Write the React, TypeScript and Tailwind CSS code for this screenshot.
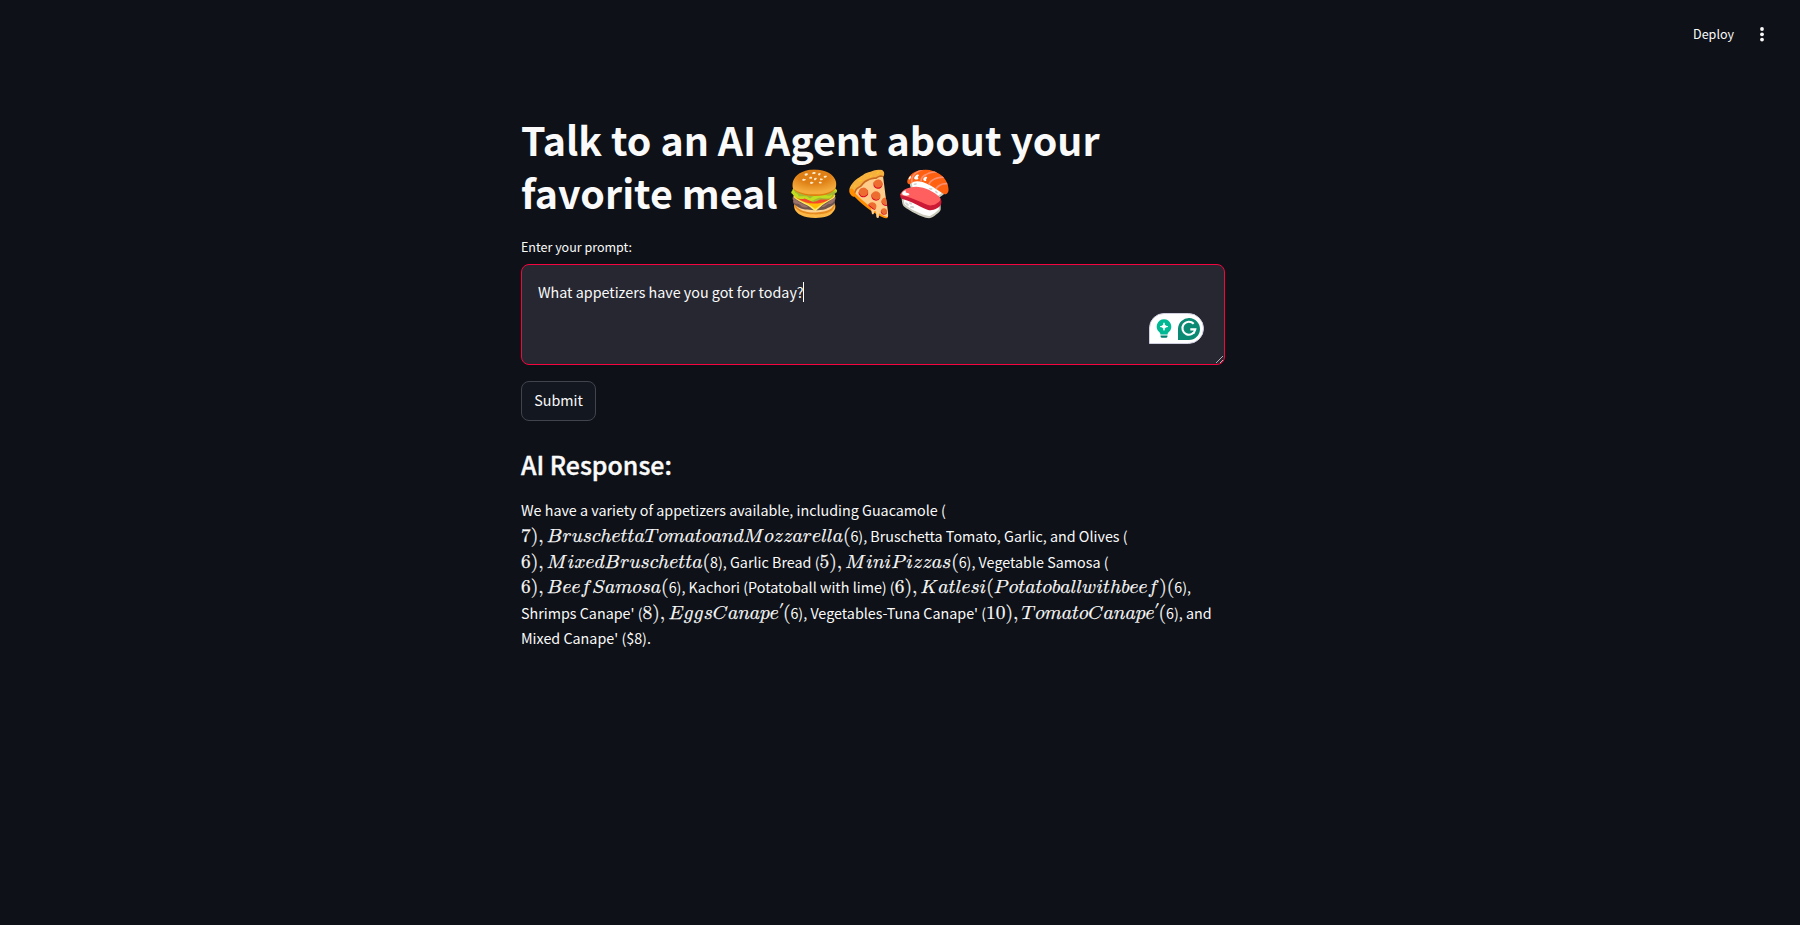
import { Fragment, type ReactNode } from "react";

// Italic correction that follows each slanted letter.
const italicGap: Record<string, string> = {
  B: "mr-[0.05em]",
  C: "mr-[0.072em]",
  E: "mr-[0.058em]",
  K: "mr-[0.072em]",
  M: "mr-[0.109em]",
  P: "mr-[0.139em]",
  S: "mr-[0.058em]",
  T: "mr-[0.125em]",
  f: "mr-[0.108em]",
  g: "mr-[0.036em]",
  r: "mr-[0.028em]",
  w: "mr-[0.027em]",
  z: "mr-[0.02em]",
};

function Formula({ children }: { children: string }) {
  const parts = children.match(/\d+|./g) ?? [];
  return (
    <math className="text-[19.36px] leading-none font-['Latin_Modern_Math',math] [-webkit-text-stroke:0.25px_#fafafa]">
      <mrow>
        {parts.map((part, i) => {
          if (/\d/.test(part)) return <mn key={i}>{part}</mn>;
          if (part === "(" || part === ")")
            return (
              <mo key={i} stretchy="false" lspace="0" rspace="0">
                {part}
              </mo>
            );
          if (part === ",")
            return (
              <mo key={i} lspace="0" rspace="0.1667em">
                ,
              </mo>
            );
          if (part === "′")
            return (
              <mpadded key={i} voffset="4px" lspace="-0.5px" width="4px" height="0" depth="0">
                <mtext className="text-[16px]">′</mtext>
              </mpadded>
            );
          return (
            <mi key={i} className={italicGap[part] ?? ""}>
              {part}
            </mi>
          );
        })}
      </mrow>
    </math>
  );
}

// Text between dollar signs is set as mathematics.
const responseLines = [
  "We have a variety of appetizers available, including Guacamole (",
  "$7),BruschettaTomatoandMozzarella($6), Bruschetta Tomato, Garlic, and Olives (",
  "$6),MixedBruschetta($8), Garlic Bread ($5),MiniPizzas($6), Vegetable Samosa (",
  "$6),BeefSamosa($6), Kachori (Potatoball with lime) ($6),Katlesi(Potatoballwithbeef)($6),",
  "Shrimps Canape' ($8),EggsCanape′($6), Vegetables-Tuna Canape' ($10),TomatoCanape′($6), and",
  "Mixed Canape' (\\$8).",
];

function renderLine(line: string): ReactNode {
  return line.split(/(?<!\\)\$/).map((piece, i) =>
    i % 2 === 1 ? (
      <Formula key={i}>{piece}</Formula>
    ) : (
      <Fragment key={i}>{piece.replace("\\$", "$")}</Fragment>
    )
  );
}

function AssistantBadge() {
  return (
    <svg className="absolute right-5 bottom-[20px] h-[31px] w-[55px]" viewBox="0 0 55 31">
      <path d="M.5 30.500V15A14.500 14.500 0 0 1 15 .5h24.500a15 15 0 0 1 0 30z" fill="#fff" stroke="#cfcfe0" />
      <path
        d="M15 6.300a7.300 7.300 0 0 0-4.900 12.700c.9.800 1.200 1.300 1.300 2.500h7.200c.1-1.200.4-1.700 1.300-2.500A7.300 7.300 0 0 0 15 6.300z"
        fill="#00b893"
      />
      <path d="M11.500 22.500h7v.8a1.600 1.600 0 0 1-1.600 1.500h-3.800a1.600 1.600 0 0 1-1.600-1.500z" fill="#027e6f" />
      <path d="M15 9.800c.5 2.600 1.200 3.300 3.800 3.800-2.600.5-3.300 1.200-3.800 3.800-.5-2.600-1.200-3.300-3.800-3.800 2.600-.5 3.300-1.200 3.800-3.800z" fill="#fff" stroke="#fff" strokeWidth=".8" />
      <path d="M29 27V15.500A11 11 0 1 1 40 27z" fill="#0a8a73" />
      <path
        d="M44.700 10.800A6.500 6.500 0 1 0 46.300 16.400H41.300M46.300 16.400l-1.900 4.200"
        fill="none"
        stroke="#fff"
        strokeWidth="2.100"
      />
    </svg>
  );
}

export default function App() {
  return (
    <div className="h-[925px] w-full overflow-hidden bg-[#0e1117] font-['Noto_Sans_CJK_SC','Noto_Sans',sans-serif] text-[#fafafa]">
      <header className="flex h-[60px] items-center justify-end pt-[7px] pr-[32px]">
        <span className="text-[12.53px] leading-5">Deploy</span>
        <svg className="ml-[22px] h-5 w-3" viewBox="0 0 12 20" fill="currentColor">
          <circle cx="6" cy="5" r="1.900" />
          <circle cx="6" cy="10.300" r="1.900" />
          <circle cx="6" cy="15.600" r="1.900" />
        </svg>
      </header>

      <main className="ml-[521px] flex w-[704px] flex-col items-start pt-[53px]">
        <h1 className="text-[39.36px] leading-[52.800px] font-bold whitespace-pre">
          Talk to an AI Agent about your
          <br />
          favorite meal <span className="ml-px font-['Noto_Color_Emoji'] text-[44px] leading-none">🍔🍕🍣</span>
        </h1>
        <label className="mt-[18px] text-[12.53px] leading-[20px]">Enter your prompt:</label>

        <div className="relative mt-[7px] h-[101px] w-full rounded-lg border border-[#f4053f] bg-[#262730] px-4 pt-4">
          <div className="flex items-center text-[14.32px] leading-[22.400px] whitespace-pre">
            What appetizers have you got for today?
            <span className="-ml-px h-5 w-px bg-white" />
          </div>
          <AssistantBadge />
          <svg className="absolute right-px bottom-px h-[7px] w-[7px]" viewBox="0 0 7 7" stroke="#d8d8dc" strokeWidth=".8">
            <path d="M0 7 7 0M4 7 7 4" />
          </svg>
        </div>

        <button className="mt-4 h-10 w-[75px] rounded-lg border border-[#41444c] bg-[#131720] pb-0.5 text-[14.32px] leading-[25.600px]">
          Submit
        </button>

        <h2 className="mt-[26px] text-[24.900px] leading-[34px] font-medium [-webkit-text-stroke:0.4px_#fafafa]">
          AI Response:
        </h2>
        <div className="mt-[17px] text-[14.32px] leading-[25.600px] whitespace-pre">
          {responseLines.map((line) => (
            <p key={line} className="h-[25.600px] first:leading-6 last:leading-6">
              {renderLine(line)}
            </p>
          ))}
        </div>
      </main>
    </div>
  );
}
